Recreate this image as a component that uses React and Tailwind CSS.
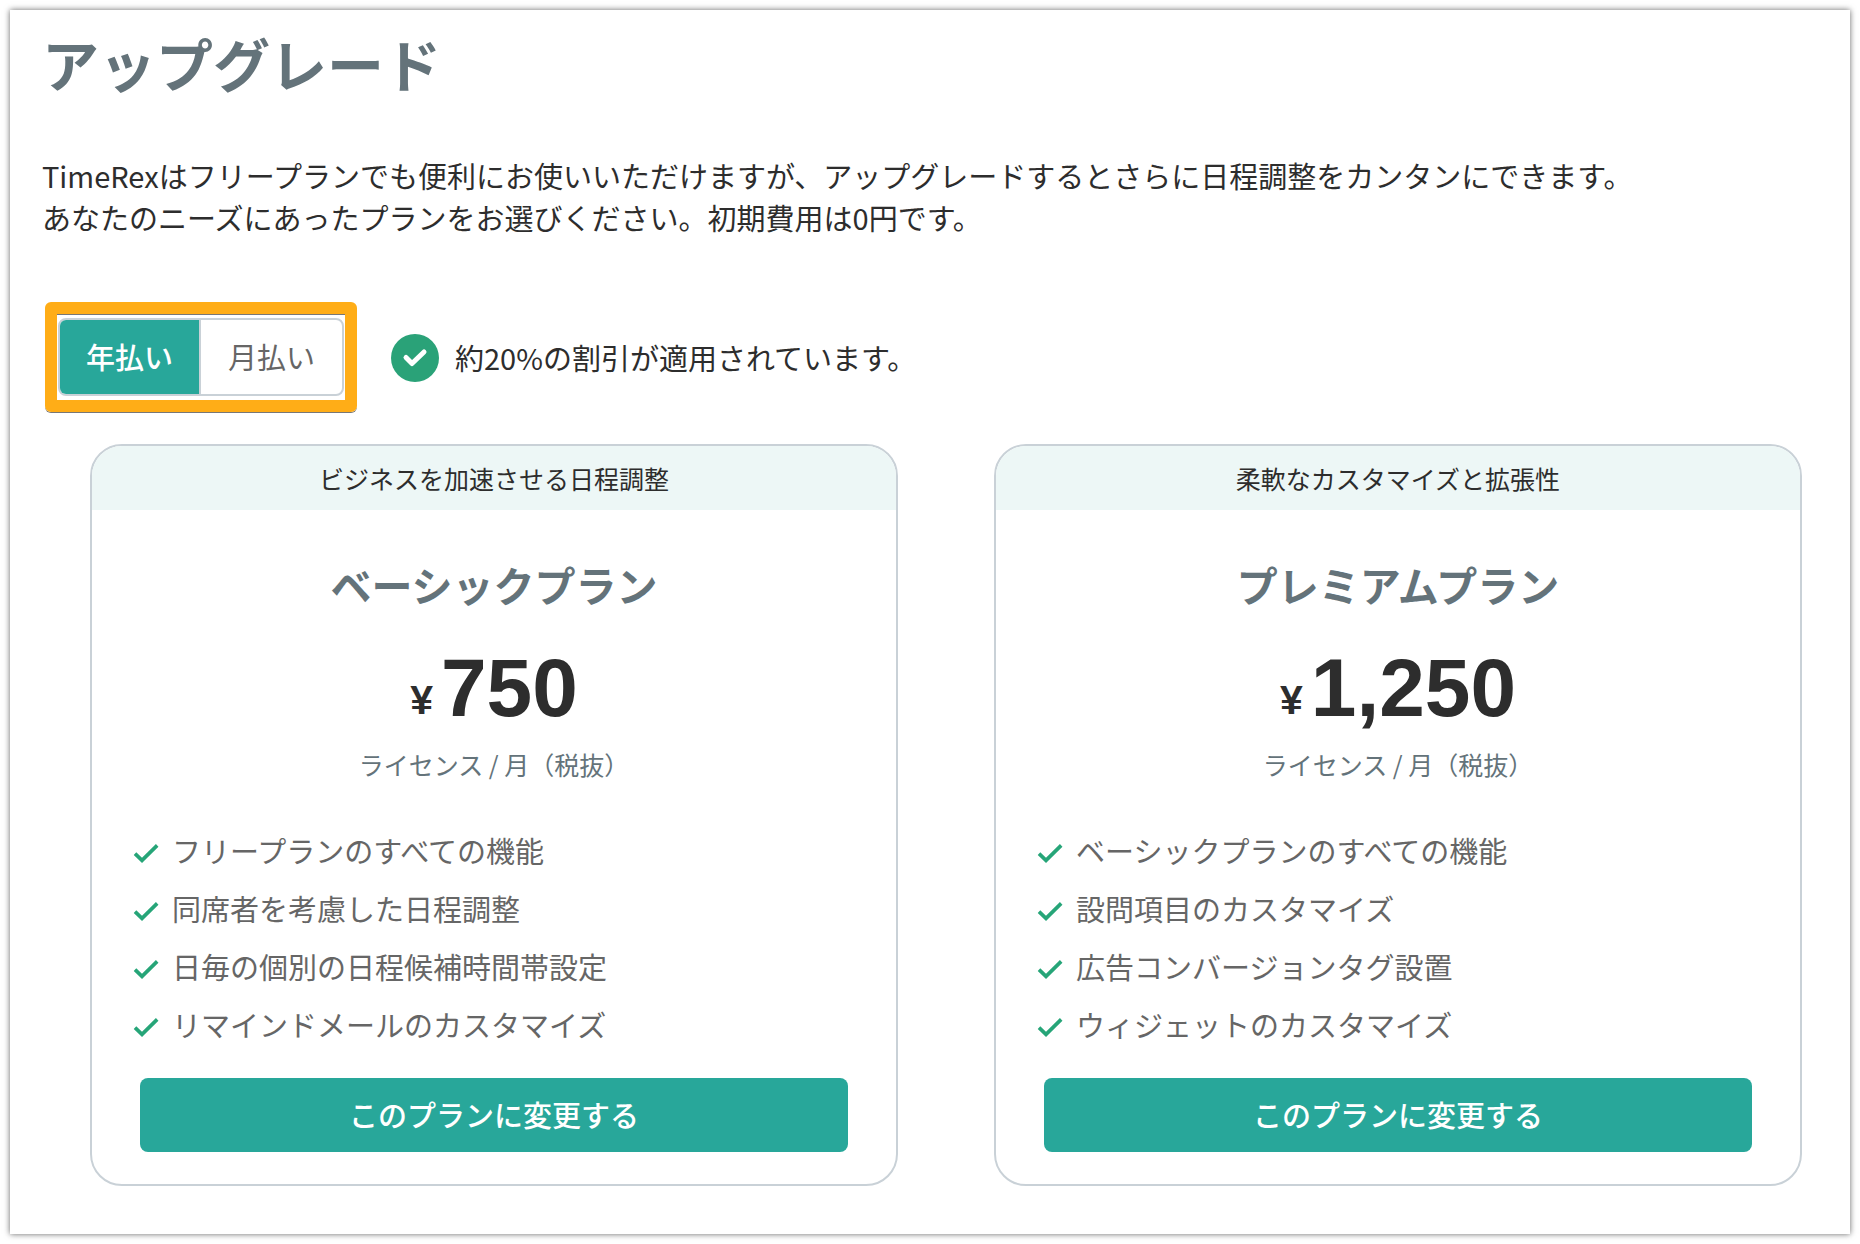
import React, { useState } from 'react'

const PLANS = [
  {
    id: 'basic',
    catch: 'ビジネスを加速させる日程調整',
    name: 'ベーシックプラン',
    price: '750',
    features: [
      'フリープランのすべての機能',
      '同席者を考慮した日程調整',
      '日毎の個別の日程候補時間帯設定',
      'リマインドメールのカスタマイズ',
    ],
  },
  {
    id: 'premium',
    catch: '柔軟なカスタマイズと拡張性',
    name: 'プレミアムプラン',
    price: '1,250',
    features: [
      'ベーシックプランのすべての機能',
      '設問項目のカスタマイズ',
      '広告コンバージョンタグ設置',
      'ウィジェットのカスタマイズ',
    ],
  },
]

function CheckIcon() {
  return (
    <svg className="h-7 w-7 shrink-0" viewBox="0 0 28 28" fill="none" stroke="#26a578" aria-hidden="true">
      <path strokeWidth={3.6} d="M3 16.6L10 23.4L25.2 8.4" />
    </svg>
  )
}

function PlanCard({ plan }) {
  return (
    <section className="overflow-hidden rounded-[32px] border-2 border-[#c9d1d7] text-center">
      <p className="bg-[#edf7f6] text-[25px] leading-16 text-[#2d2d2d]">{plan.catch}</p>
      <div className="px-12 pt-[42px] pb-8">
        <h2 className="text-[41px] leading-16 font-bold text-[#64737a]">{plan.name}</h2>
        <p className="mt-8 flex items-end justify-center gap-2 font-['Liberation_Sans',sans-serif] font-bold text-[#2d2d2d]">
          <span className="text-[41px] leading-14">¥</span>
          <span className="text-[82px] leading-20">{plan.price}</span>
        </p>
        <p className="mt-4 text-[25px] leading-10 text-[#64737a]">ライセンス / 月（税抜）</p>
        <ul className="-mx-2 mt-[38px] text-left">
          {plan.features.map((feature) => (
            <li key={feature} className="flex h-[58px] items-center gap-3 text-[29px] text-[#666666]">
              <CheckIcon />
              {feature}
            </li>
          ))}
        </ul>
        <button
          type="button"
          className="mt-6 h-[74px] w-full rounded-lg bg-[#28a79a] text-[29px] font-medium text-white"
        >
          このプランに変更する
        </button>
      </div>
    </section>
  )
}

export default function App() {
  const [cycle, setCycle] = useState('yearly')

  return (
    <div className="bg-white p-[10px] font-['Noto_Sans_CJK_JP',sans-serif]">
      <main className="bg-white px-8 pt-3 pb-12 shadow-[0_0_6px_rgba(0,0,0,0.6)]">
        <h1 className="text-[57px] leading-20 font-bold text-[#64737a]">アップグレード</h1>
        <p className="mt-[52px] text-[29px] leading-[42px] text-[#2d2d2d]">
          TimeRexはフリープランでも便利にお使いいただけますが、アップグレードするとさらに日程調整をカンタンにできます。
          <br />
          あなたのニーズにあったプランをお選びください。初期費用は0円です。
        </p>

        <div className="mt-16 ml-[3px] flex items-center">
          <div className="rounded-md border-12 border-[#ffad17] px-px py-1 shadow-[0_1px_0_#777777,inset_0_1px_0_#777777]">
            <div className="flex h-[78px] overflow-hidden rounded-lg border-2 border-[#c9d1d7] text-[29px]">
              <button
                type="button"
                aria-pressed={cycle === 'yearly'}
                onClick={() => setCycle('yearly')}
                className={`w-[139px] ${cycle === 'yearly' ? 'bg-[#28a79a] font-medium text-white' : 'text-[#666666]'}`}
              >
                年払い
              </button>
              <button
                type="button"
                aria-pressed={cycle === 'monthly'}
                onClick={() => setCycle('monthly')}
                className={`w-[143px] border-l-2 border-[#c9d1d7] ${cycle === 'monthly' ? 'bg-[#28a79a] font-medium text-white' : 'text-[#666666]'}`}
              >
                月払い
              </button>
            </div>
          </div>
          <div className="ml-[34px] flex items-center gap-4 pt-[2px]">
            <svg className="h-12 w-12" viewBox="0 0 48 48" fill="none" aria-hidden="true">
              <circle cx="24" cy="24" r="24" fill="#2aa278" />
              <path
                stroke="white"
                strokeWidth={5}
                strokeLinecap="round"
                strokeLinejoin="round"
                d="M15 23.5L21 29.5L33 18"
              />
            </svg>
            <p className="text-[29px] text-[#2d2d2d]">約20%の割引が適用されています。</p>
          </div>
        </div>

        <div className="mt-8 grid grid-cols-2 gap-24 pr-4 pl-12">
          {PLANS.map((plan) => (
            <PlanCard key={plan.id} plan={plan} />
          ))}
        </div>
      </main>
    </div>
  )
}
